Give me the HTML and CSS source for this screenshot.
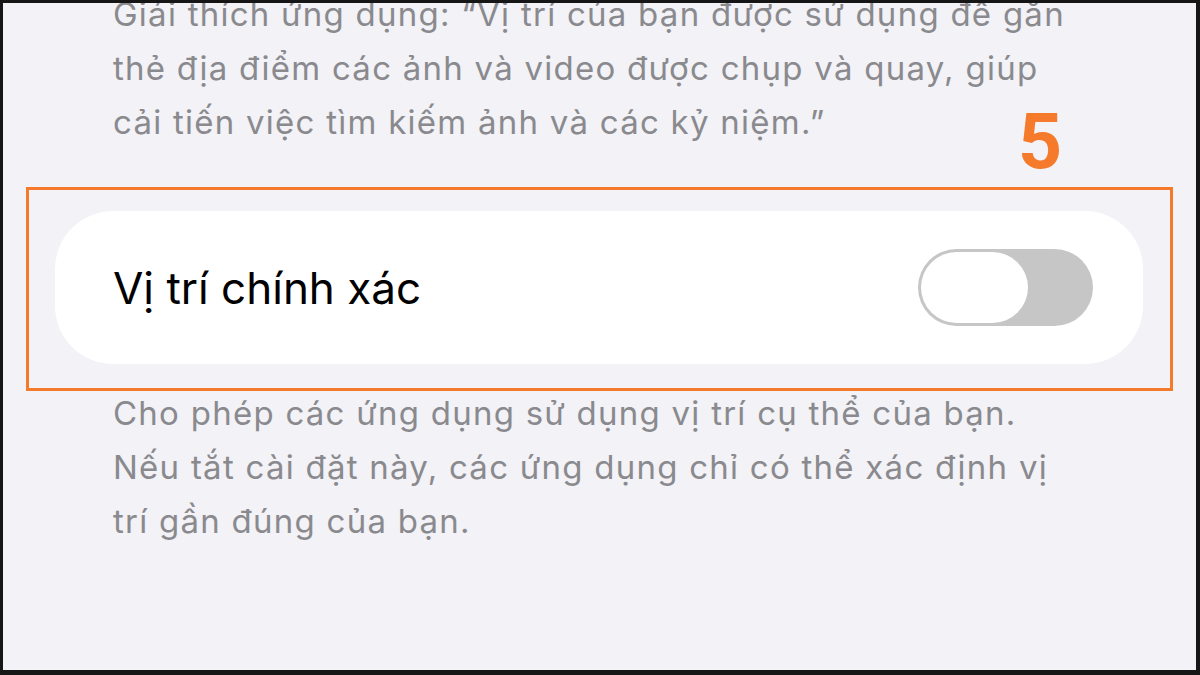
FILE: index.html
```html
<!DOCTYPE html>
<html lang="vi">
<head>
    <meta charset="UTF-8">
    <meta name="viewport" content="width=device-width, initial-scale=1.0">
    <title>Vị trí chính xác</title>
    <link rel="stylesheet" href="styles.css">
</head>
<body>
    <div class="screen">
        <p class="footnote footnote-top">
            Giải thích ứng dụng: “Vị trí của bạn được sử dụng để gắn<br>
            thẻ địa điểm các ảnh và video được chụp và quay, giúp<br>
            cải tiến việc tìm kiếm ảnh và các kỷ niệm.”
        </p>

        <!-- Step marker for the highlighted setting -->
        <span class="step-number">5</span>

        <div class="highlight-box">
            <div class="setting-row">
                <span class="setting-label">Vị trí chính xác</span>
                <div class="toggle">
                    <div class="toggle-knob"></div>
                </div>
            </div>
        </div>

        <p class="footnote footnote-bottom">
            Cho phép các ứng dụng sử dụng vị trí cụ thể của bạn.<br>
            Nếu tắt cài đặt này, các ứng dụng chỉ có thể xác định vị<br>
            trí gần đúng của bạn.
        </p>
    </div>
</body>
</html>
```

FILE: styles.css
```css
body {
    margin: 0;
    font-family: Inter, Roboto, sans-serif;
    background-color: #161616;
}

.screen {
    position: relative;
    height: 675px;
    box-sizing: border-box;
    border-style: solid;
    border-color: #161616;
    border-width: 3px 4px 5px 3px;
    background-color: #f2f2f7;
    overflow: hidden;
}

.footnote {
    margin: 0 0 0 110px;
    font-size: 33px;
    letter-spacing: 1.25px;
    line-height: 54px;
    color: #8a8a8e;
}

.footnote-top {
    margin-top: -16px;
}

.footnote-bottom {
    margin-top: -5px;
}

/* Orange annotation */
.step-number {
    position: absolute;
    top: 101px;
    left: 1015px;
    font-family: Roboto, sans-serif;
    font-size: 77px;
    font-weight: bold;
    line-height: 1;
    color: #f57a2c;
}

.highlight-box {
    margin: 38px 23px 0 23px;
    padding: 21px 27px 24px 26px;
    border: 3px solid #f57a2c;
}

.setting-row {
    display: flex;
    align-items: center;
    justify-content: space-between;
    height: 153px;
    padding: 0 50px 0 58px;
    background-color: #fff;
    border-radius: 58px;
}

.setting-label {
    font-size: 44px;
    color: #000;
}

/* Switch in the off state */
.toggle {
    width: 175px;
    height: 77px;
    padding: 3px;
    box-sizing: border-box;
    background-color: #c6c6c6;
    border-radius: 39px;
}

.toggle-knob {
    width: 107px;
    height: 71px;
    background-color: #fff;
    border-radius: 36px;
}
```
